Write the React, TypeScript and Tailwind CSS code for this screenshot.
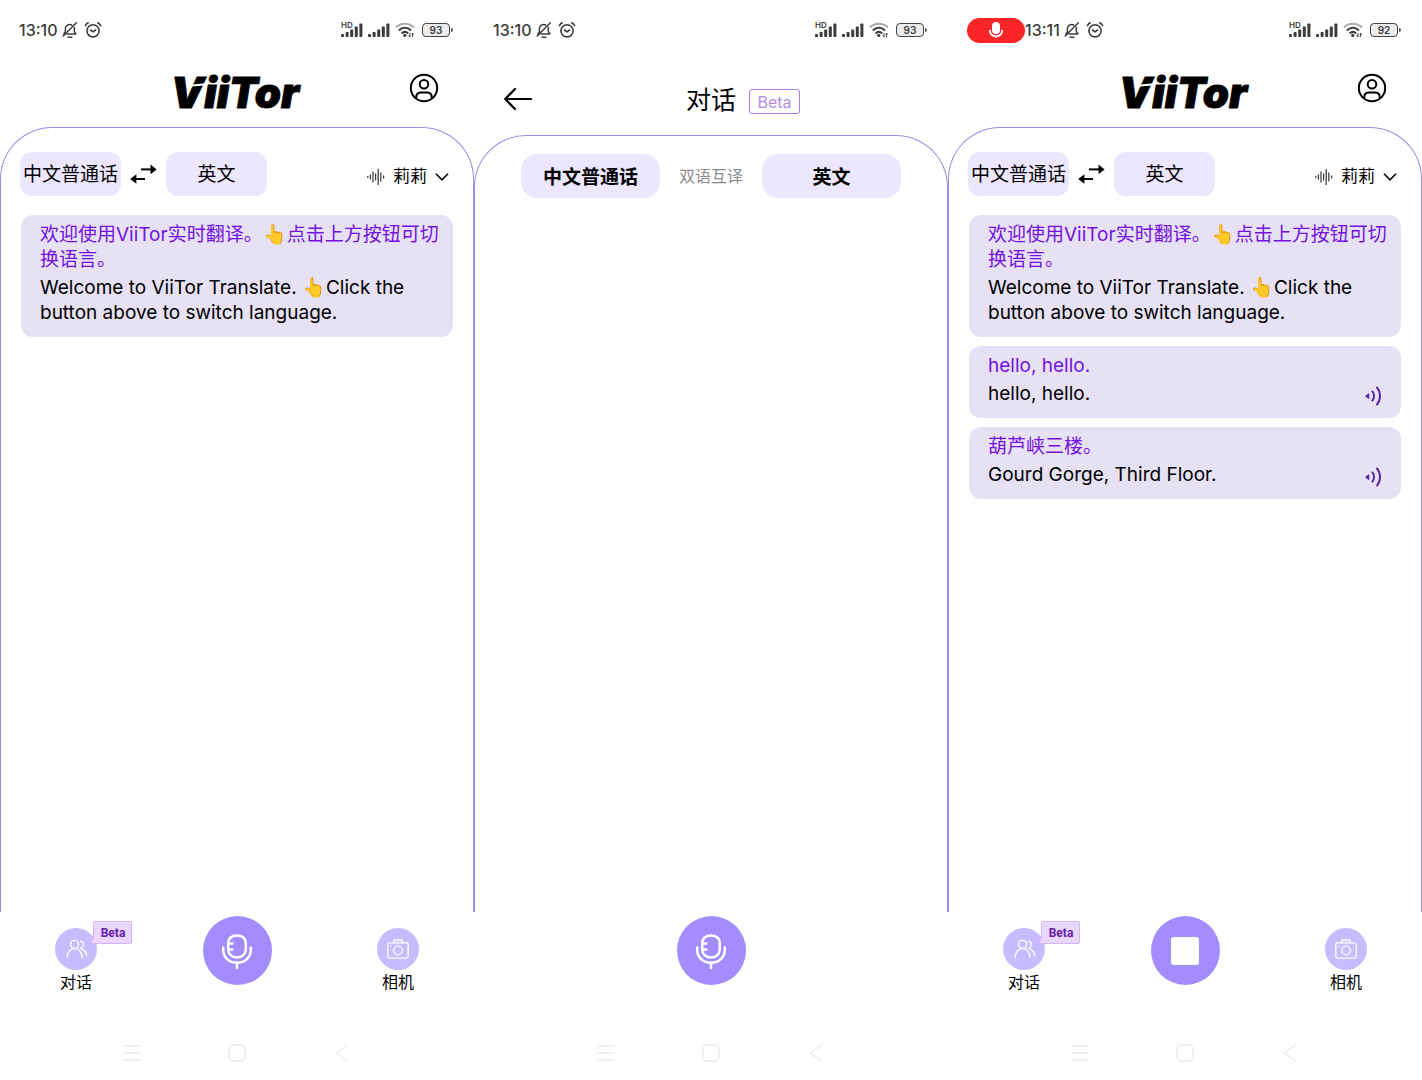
import type { ReactNode } from "react";

function BellOffIcon() {
  return (
    <svg width="16" height="16" viewBox="0 0 16 16" fill="none" stroke="currentColor" strokeWidth="1.5" strokeLinecap="round" strokeLinejoin="round" aria-hidden="true">
      <path d="M9.8 3C6.4 1.4 3.6 3.6 3.4 6.6V9.8L2 11.8V12.4" />
      <path d="M12.3 5.4V9.6L13.9 12H5" />
      <path d="M14.4 0.8L1.2 14" />
      <path d="M6 15.2H9.8" />
    </svg>
  );
}

function AlarmIcon() {
  return (
    <svg width="18" height="18" viewBox="0 0 18 18" fill="none" stroke="currentColor" strokeWidth="1.6" strokeLinecap="round" strokeLinejoin="round" aria-hidden="true">
      <circle cx="9" cy="9.8" r="6.1" />
      <path d="M1.4 4.6C2 3.4 3 2.4 4.2 1.8" />
      <path d="M16.6 4.6C16 3.4 15 2.4 13.8 1.8" />
      <path d="M6.6 9L9 10.8L11.6 9" />
    </svg>
  );
}

function SignalIcon() {
  return (
    <svg width="22" height="16" viewBox="0 0 22 16" fill="currentColor" aria-hidden="true">
      <rect x="0" y="12" width="3" height="3" rx="0.8" />
      <rect x="4.6" y="10" width="3" height="5" rx="0.8" />
      <rect x="9.2" y="7.4" width="3" height="7.6" rx="0.8" />
      <rect x="13.8" y="4.4" width="3" height="10.6" rx="0.8" />
      <rect x="18.4" y="1.4" width="3" height="13.6" rx="0.8" />
    </svg>
  );
}

function WifiIcon() {
  return (
    <svg width="20" height="16" viewBox="0 0 20 16" fill="none" stroke="currentColor" strokeWidth="2" aria-hidden="true">
      <path d="M0.8 5.4C6 0.4 13.6 0.4 19 5.4" stroke="#aaa" />
      <path d="M3.8 8.4C7.4 5 12.4 5 16 8.4" />
      <path d="M6.6 11.4C8.6 9.6 11.2 9.6 13.2 11.4" />
      <circle cx="9.8" cy="13.4" r="1.6" fill="currentColor" stroke="none" />
      <path d="M15 11V15M13.8 13.4L15 15M17.4 15V11M18.6 12.6L17.4 11" strokeWidth="1" />
    </svg>
  );
}

function StatusBar({ time, battery, recording }: { time: string; battery: string; recording?: boolean }) {
  return (
    <div className="flex h-[60px] shrink-0 items-center justify-between pr-[21px] pl-[19px] text-[#3c3c3c]">
      <div className="flex items-center">
        {recording && (
          <span className="flex h-[25px] w-[58px] items-center justify-center rounded-full bg-[#fb2429]" role="img" aria-label="Microphone in use">
            <svg width="16" height="18" viewBox="0 0 16 18" fill="none" aria-hidden="true">
              <rect x="4" y="1" width="8" height="12" rx="4" fill="#fff" />
              <path d="M1.8 9.6C2.2 13.2 4.8 15.2 8 15.2S13.8 13.2 14.2 9.6" stroke="#fff" strokeWidth="1.8" strokeLinecap="round" />
              <path d="M8 15V16.8" stroke="#fff" strokeWidth="2" />
            </svg>
          </span>
        )}
        <time className="text-base font-medium">{time}</time>
        <span className="ml-1 flex items-center gap-1.5">
          <BellOffIcon />
          <AlarmIcon />
        </span>
      </div>
      <div className="flex items-center gap-[5px]">
        <span className="relative pl-0.5">
          <SignalIcon />
          <span className="absolute -top-px left-0.5 text-[8px] leading-none font-semibold">HD</span>
        </span>
        <SignalIcon />
        <WifiIcon />
        <span className="ml-0.5 flex items-center gap-px">
          <span className="flex h-[14px] w-[28px] items-center justify-center rounded-[4px] border border-[#444] bg-[#ececec] text-[10px] leading-none font-semibold">
            {battery}
          </span>
          <span className="h-1 w-0.5 rounded-r bg-[#555]" />
        </span>
      </div>
    </div>
  );
}

function Logo() {
  return (
    <h1 className="relative mr-1 text-[42px] leading-[42px] font-black text-black italic [-webkit-text-stroke:1px_#000]">
      ViiTor
      <span className="absolute top-3 left-[19px] h-0.5 w-4 -rotate-6 bg-white" />
    </h1>
  );
}

function MainHeader() {
  return (
    <header className="grid h-[67px] shrink-0 grid-cols-[1fr_auto_1fr] items-start px-[35px] pt-3">
      <span />
      <Logo />
      <button type="button" aria-label="Account" className="mt-px justify-self-end text-black">
        <svg width="30" height="30" viewBox="0 0 30 30" fill="none" stroke="currentColor" strokeWidth="2" aria-hidden="true">
          <circle cx="15" cy="15" r="13.2" />
          <circle cx="15" cy="11.2" r="4.3" />
          <path d="M7.2 25.4V24.4C7.2 21.2 9 19.4 11.8 19.4H18.2C21 19.4 22.8 21.2 22.8 24.4V25.4" />
        </svg>
      </button>
    </header>
  );
}

function Panel({ children }: { children?: ReactNode }) {
  return (
    <main className="flex-1 rounded-t-[52px] border border-b-0 border-[#9d8ce6] px-5">{children}</main>
  );
}

function LanguageBar() {
  return (
    <div className="flex items-center pt-6">
      <button type="button" className="-ml-px h-11 w-[101px] rounded-xl bg-[#ece6fe] pt-0.5 text-[19px] whitespace-nowrap text-black">
        中文普通话
      </button>
      <button type="button" aria-label="Swap languages" className="mx-[9px] text-black">
        <svg width="27" height="22" viewBox="0 0 27 22" fill="none" stroke="currentColor" strokeWidth="2" aria-hidden="true">
          <path d="M11 6.4H22" />
          <path d="M20.5 1.6L26.6 6.4L20.5 11.2Z" fill="currentColor" stroke="none" />
          <path d="M5 16H15" />
          <path d="M6.4 11.2L0.2 16L6.4 20.8Z" fill="currentColor" stroke="none" />
        </svg>
      </button>
      <button type="button" className="h-11 w-[101px] rounded-xl bg-[#ece6fe] pt-0.5 text-[19px] text-black">
        英文
      </button>
      <button type="button" className="mt-1.5 mr-1 ml-auto flex items-center text-[17px] text-black">
        <svg width="18" height="18" viewBox="0 0 18 18" stroke="#444" strokeWidth="1.3" strokeLinecap="round" aria-hidden="true">
          <path d="M0.8 8.4V9.6M3.4 7V11M6 4V14M8.6 6V12M11.2 1.4V16.6M13.8 5V13M16.6 8V10" />
        </svg>
        <span className="ml-2">莉莉</span>
        <svg width="14" height="10" viewBox="0 0 14 10" fill="none" stroke="currentColor" strokeWidth="1.6" className="ml-2" aria-hidden="true">
          <path d="M1 1.8L7 7.8L13 1.8" />
        </svg>
      </button>
    </div>
  );
}

function Message({ source, target, playable }: { source: string; target: string; playable?: boolean }) {
  return (
    <li className="flex items-end justify-between rounded-xl bg-[#e6e1f5] pt-[7px] pr-[19px] pb-3 pl-[19px] text-[19px] leading-[25px]">
      <div className="-mr-3 flex flex-col gap-[3px]">
        <p className="text-[#7311e0]">{source}</p>
        <p className="text-black">{target}</p>
      </div>
      {playable && (
        <button type="button" aria-label="Play translation" className="text-[#55209c]">
          <svg width="17" height="20" viewBox="0 0 17 20" fill="none" stroke="currentColor" strokeWidth="1.9" strokeLinecap="round" aria-hidden="true">
            <path d="M0.8 10L3.8 7.8V12.2Z" fill="currentColor" strokeWidth="1" strokeLinejoin="round" />
            <path d="M7.4 5.4C9.6 8 9.6 12 7.4 14.6" />
            <path d="M12 1.4C16 6.4 16 13.6 12 18.6" />
          </svg>
        </button>
      )}
    </li>
  );
}

function MicIcon() {
  return (
    <svg width="32" height="38" viewBox="0 0 32 38" fill="none" stroke="#fff" strokeWidth="2.5" strokeLinecap="round" aria-hidden="true">
      <path d="M7.2 11.6C7.2 6.4 10.8 3.4 16 3.4S24.8 6.4 24.8 11.6V17C24.8 22.2 21.2 25.4 16 25.4S7.2 22.2 7.2 17Z" />
      <path d="M7.4 11.4H11.4M7.4 17.4H11.4" />
      <path d="M2.2 15.4V17.6C2.2 25.6 8 30.8 16 30.8S29.8 25.6 29.8 17.6V15.4" />
      <path d="M16 31V36" />
    </svg>
  );
}

function RoundButton({ stop }: { stop?: boolean }) {
  return (
    <button type="button" aria-label={stop ? "Stop" : "Speak"} className="flex size-[69px] items-center justify-center rounded-full bg-[#a28cff]">
      {stop ? <span className="size-7 rounded-[3px] bg-white" /> : <MicIcon />}
    </button>
  );
}

function ActionBar({ stop }: { stop?: boolean }) {
  return (
    <nav className="flex h-[114px] shrink-0 items-start justify-between px-[55px] pt-1">
      <button type="button" className="relative mt-3 flex flex-col items-center text-base leading-6 text-black">
        <span className="flex size-[42px] items-center justify-center rounded-full bg-[#c8bbff]">
          <svg width="22" height="20" viewBox="0 0 22 20" fill="none" stroke="#fff" strokeWidth="1.4" strokeLinecap="round" className="ml-0.5" aria-hidden="true">
            <circle cx="8.6" cy="5.4" r="4" />
            <path d="M1.2 18.6C1.2 13.4 4 9.6 8.6 9.6S16 13.4 16 18.6" />
            <path d="M14.4 2.2C16.6 2.6 17.6 4 17.4 6C17.2 7.8 16.2 8.8 14.8 9.4C18.4 10.6 20.2 13 20.6 16.6" />
          </svg>
        </span>
        对话
        <span className="absolute -top-[7px] left-[35px] flex h-[23px] w-[42px] items-center">
          <svg width="42" height="23" viewBox="0 0 42 23" className="absolute inset-0" aria-hidden="true">
            <path d="M4.5 0.5H40Q41.5 0.5 41.5 2V21Q41.5 22.5 40 22.5H0.5L3.5 17V1.5Q3.5 0.5 4.5 0.5Z" fill="#ead5fc" stroke="#d3b6f5" />
          </svg>
          <span className="relative w-full pl-1 text-center font-[Roboto] text-xs font-bold text-[#6420ad]">Beta</span>
        </span>
      </button>
      <RoundButton stop={stop} />
      <button type="button" className="mt-3 flex flex-col items-center text-base leading-6 text-black">
        <span className="flex size-[42px] items-center justify-center rounded-full bg-[#c8bbff]">
          <svg width="22" height="20" viewBox="0 0 22 20" fill="none" stroke="#fff" strokeWidth="1.3" strokeLinejoin="round" aria-hidden="true">
            <rect x="0.8" y="3.8" width="20.4" height="15.4" rx="1.8" />
            <path d="M6.6 3.8V2.4Q6.6 1 8 1H14Q15.4 1 15.4 2.4V3.8" />
            <circle cx="11" cy="11.4" r="4.3" />
            <path d="M3.4 6.8H4.8" />
          </svg>
        </span>
        相机
      </button>
    </nav>
  );
}

function SystemNav() {
  return (
    <div className="flex h-[54px] shrink-0 items-center justify-center gap-[87px] text-[#ececec]">
      <button type="button" aria-label="Recent apps">
        <svg width="18" height="18" viewBox="0 0 18 18" stroke="currentColor" strokeWidth="1.5" aria-hidden="true">
          <path d="M0.5 2H17.5M0.5 9H17.5M0.5 16H17.5" />
        </svg>
      </button>
      <button type="button" aria-label="Home">
        <svg width="18" height="18" viewBox="0 0 18 18" fill="none" stroke="currentColor" strokeWidth="1.5" aria-hidden="true">
          <rect x="1" y="1" width="16" height="16" rx="4" />
        </svg>
      </button>
      <button type="button" aria-label="Back">
        <svg width="18" height="18" viewBox="0 0 18 18" fill="none" stroke="currentColor" strokeWidth="1.5" aria-hidden="true">
          <path d="M14.5 1L3.5 9L14.5 17" />
        </svg>
      </button>
    </div>
  );
}

function TranslateScreen({ time, battery, live }: { time: string; battery: string; live?: boolean }) {
  return (
    <section className="flex flex-col">
      <StatusBar time={time} battery={battery} recording={live} />
      <MainHeader />
      <Panel>
        <LanguageBar />
        <ul className="mt-[19px] flex flex-col gap-[9px]">
          <Message
            source="欢迎使用ViiTor实时翻译。👆点击上方按钮可切换语言。"
            target="Welcome to ViiTor Translate. 👆Click the button above to switch language."
          />
          {live && (
            <>
              <Message source="hello, hello." target="hello, hello." playable />
              <Message source="葫芦峡三楼。" target="Gourd Gorge, Third Floor." playable />
            </>
          )}
        </ul>
      </Panel>
      <ActionBar stop={live} />
      <SystemNav />
    </section>
  );
}

function DialogueScreen() {
  return (
    <section className="flex flex-col">
      <StatusBar time="13:10" battery="93" />
      <header className="grid h-[75px] shrink-0 grid-cols-[1fr_auto_1fr] items-center px-[30px] pt-0.5">
        <button type="button" aria-label="Back" className="justify-self-start text-black">
          <svg width="28" height="24" viewBox="0 0 28 24" fill="none" stroke="currentColor" strokeWidth="2.2" strokeLinecap="round" strokeLinejoin="round" aria-hidden="true">
            <path d="M27 12H1.4M11 2L1.2 12L11 22" />
          </svg>
        </button>
        <h1 className="pt-0.5 text-[25px] leading-[30px] text-black">对话</h1>
        <span className="mt-1.5 ml-[13px] flex h-[25px] w-[51px] items-center justify-center justify-self-start rounded-[3px] border border-[#ac7de8] text-base text-[#b48be0]">
          Beta
        </span>
      </header>
      <Panel>
        <div className="flex items-center justify-center gap-[19px] pt-[18px]">
          <button type="button" className="h-11 w-[139px] rounded-2xl bg-[#ece6fe] pt-1 text-[19px] font-bold text-black">
            中文普通话
          </button>
          <span className="text-base whitespace-nowrap text-[#8d8d8d]">双语互译</span>
          <button type="button" className="h-11 w-[139px] rounded-2xl bg-[#ece6fe] pt-1 text-[19px] font-bold text-black">
            英文
          </button>
        </div>
      </Panel>
      <nav className="flex h-[114px] shrink-0 items-start justify-center pt-1">
        <RoundButton />
      </nav>
      <SystemNav />
    </section>
  );
}

export default function App() {
  return (
    <div className="grid min-h-screen grid-cols-3 bg-white font-[Inter,'Noto_Sans_CJK_SC',sans-serif]" lang="zh-CN">
      <TranslateScreen time="13:10" battery="93" />
      <DialogueScreen />
      <TranslateScreen time="13:11" battery="92" live />
    </div>
  );
}
